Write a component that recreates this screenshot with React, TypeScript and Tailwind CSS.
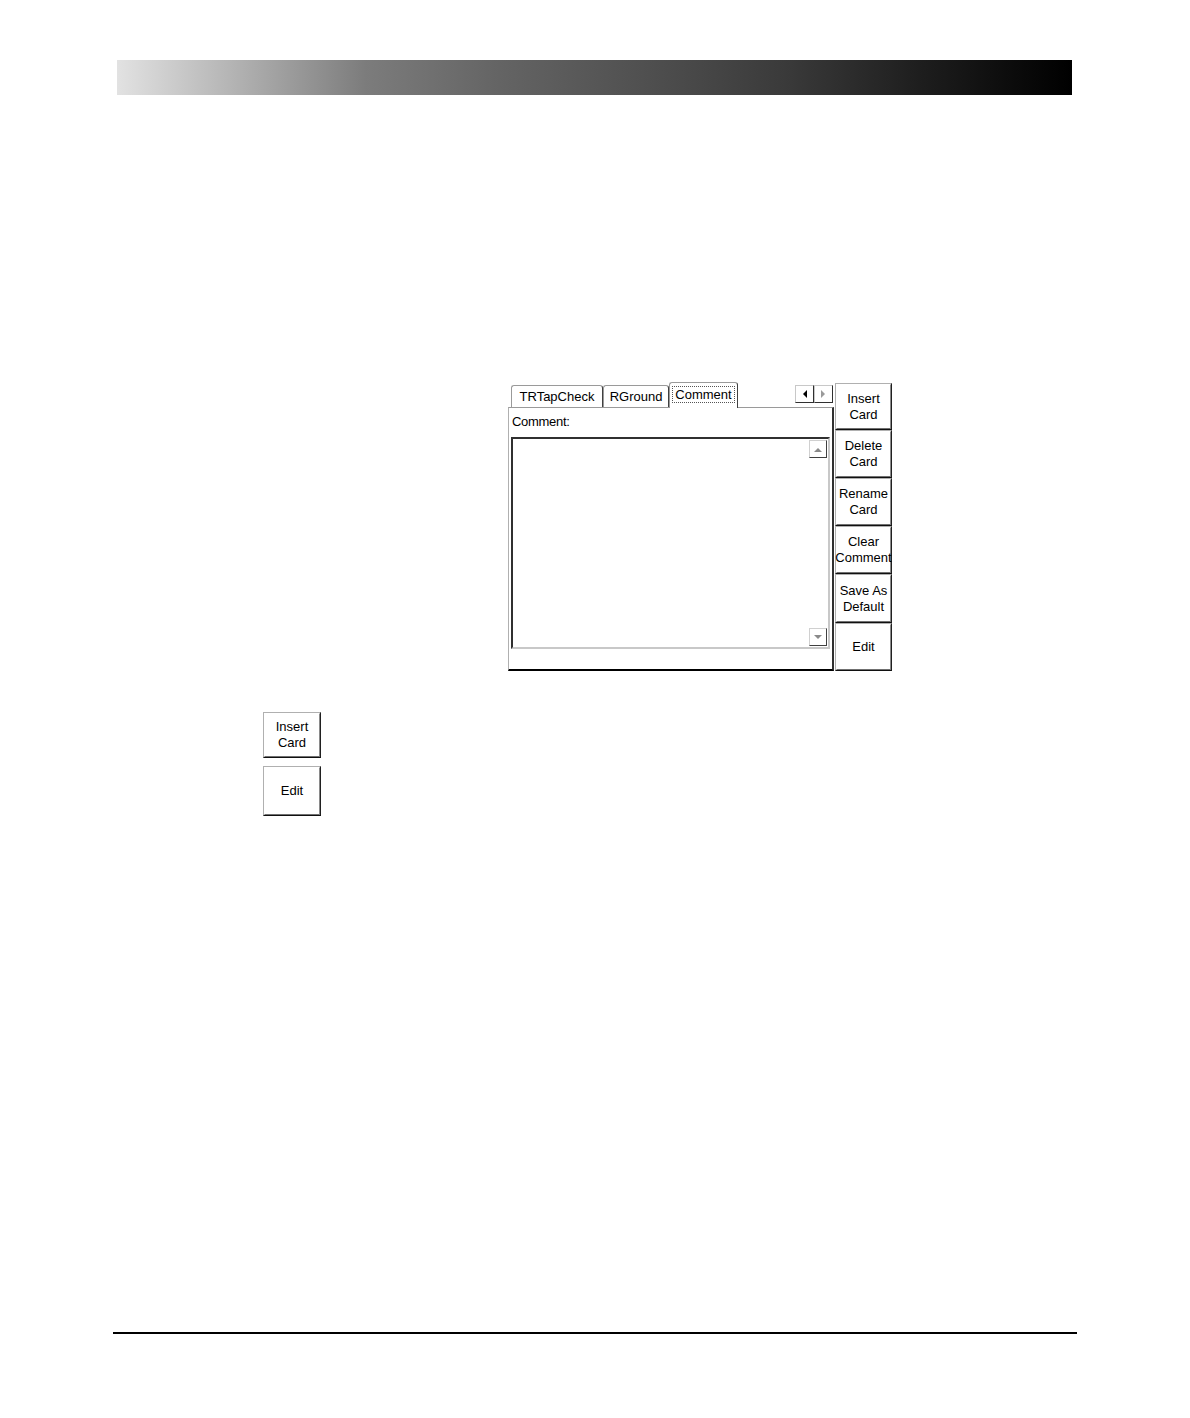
const font = { fontFamily: '"Liberation Sans", Arial, sans-serif' };

type BtnProps = { lines: string[]; className?: string };

const SideButton = ({ lines, className = "" }: BtnProps) => (
  <div
    className={`flex flex-col items-center justify-center border border-t-[#b0b0b0] border-l-[#b0b0b0] border-r-[#202020] border-b-[#101010] bg-white ${className}`}
  >
    <div className="flex h-full w-full flex-col items-center justify-center border border-t-white border-l-white border-r-[#8a8a8a] border-b-[#707070] text-[13px] leading-[16px] text-black">
      {lines.map((l) => (
        <span key={l} className="whitespace-nowrap">
          {l}
        </span>
      ))}
    </div>
  </div>
);

const Tab = ({
  label,
  width,
  active = false,
}: {
  label: string;
  width: string;
  active?: boolean;
}) => (
  <div
    className={`relative flex items-start justify-center rounded-t-[3px] border border-b-0 border-t-[#9a9a9a] border-l-[#9a9a9a] border-r-[#404040] bg-white text-[13px] leading-[15px] text-black ${width} ${
      active ? "z-10 -mb-[1px] h-[26px] pt-[4px]" : "h-[22px] pt-[3px]"
    }`}
  >
    <span
      className={`whitespace-nowrap px-[2px] ${
        active ? "outline-1 outline-dotted outline-[#555]" : ""
      }`}
    >
      {label}
    </span>
  </div>
);

const ScrollArrow = ({ up }: { up: boolean }) => (
  <div className="flex h-[18px] w-[18px] items-center justify-center border border-t-[#d0d0d0] border-l-[#d0d0d0] border-r-[#404040] border-b-[#404040] bg-white">
    <svg width="8" height="5" viewBox="0 0 8 5">
      <path d={up ? "M0 5 L4 1 L8 5 Z" : "M0 0 L4 4 L8 0 Z"} fill="#8a8a8a" />
    </svg>
  </div>
);

const NavArrow = ({ left }: { left: boolean }) => (
  <div className="flex h-[18px] w-[19px] items-center justify-center border border-t-[#c8c8c8] border-l-[#c8c8c8] border-r-[#303030] border-b-[#303030] bg-white">
    <svg width="5" height="8" viewBox="0 0 5 8">
      <path
        d={left ? "M5 0 L1 4 L5 8 Z" : "M0 0 L4 4 L0 8 Z"}
        fill={left ? "#000" : "#9a9a9a"}
      />
    </svg>
  </div>
);

export default function App() {
  return (
    <div className="flex h-[1418px] w-[1190px] flex-col bg-white" style={font}>
      {/* header bar */}
      <div className="ml-[117px] mt-[60px] h-[35px] w-[955px] bg-[linear-gradient(to_right,#e2e2e2_0%,#b4b4b4_12%,#7c7c7c_26%,#646464_40%,#505050_55%,#3a3a3a_70%,#1c1c1c_85%,#000_100%)]" />

      {/* comment card widget */}
      <div className="ml-[508px] mt-[288px] flex">
        <div className="flex w-[326px] flex-col">
          <div className="flex h-[24px] items-end pl-[3px]">
            <Tab label="TRTapCheck" width="w-[92px]" />
            <Tab label="RGround" width="w-[66px]" />
            <Tab label="Comment" width="w-[69px]" active />
            <div className="ml-auto mb-[4px] mr-[1px] flex">
              <NavArrow left />
              <NavArrow left={false} />
            </div>
          </div>
          <div className="flex h-[264px] flex-col border-t border-l border-t-[#9a9a9a] border-l-[#b0b0b0] border-r-2 border-r-[#303030] border-b-2 border-b-black bg-white">
            <div className="h-[29px] pl-[3px] pt-[6px] text-[13px] leading-[15px] tracking-[-0.3px] text-black">
              Comment:
            </div>
            <div className="mx-[2px] flex h-[212px] justify-end border-t-2 border-l-2 border-t-[#303030] border-l-[#303030] border-r-2 border-b-2 border-r-[#c8c8c8] border-b-[#c8c8c8] bg-white">
              <div className="flex flex-col justify-between py-[1px] pr-[1px]">
                <ScrollArrow up />
                <ScrollArrow up={false} />
              </div>
            </div>
          </div>
        </div>
        <div className="ml-[1px] flex w-[57px] flex-col">
          <SideButton lines={["Insert", "Card"]} className="h-[47px]" />
          <SideButton lines={["Delete", "Card"]} className="h-[48px]" />
          <SideButton lines={["Rename", "Card"]} className="h-[48px]" />
          <SideButton lines={["Clear", "Comment"]} className="h-[48px]" />
          <SideButton lines={["Save As", "Default"]} className="h-[49px]" />
          <SideButton lines={["Edit"]} className="h-[48px]" />
        </div>
      </div>

      {/* legend buttons */}
      <div className="ml-[263px] mt-[41px] flex w-[58px] flex-col gap-[8px]">
        <SideButton lines={["Insert", "Card"]} className="h-[46px]" />
        <SideButton lines={["Edit"]} className="h-[50px]" />
      </div>

      {/* footer rule */}
      <div className="ml-[113px] mt-[516px] h-[2px] w-[964px] bg-black" />
    </div>
  );
}
